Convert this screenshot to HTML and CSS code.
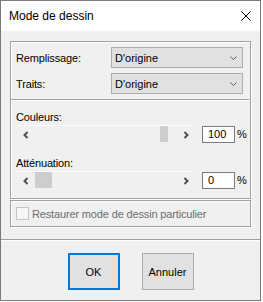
FILE: index.html
```html
<!DOCTYPE html>
<html lang="fr">
<head>
    <meta charset="UTF-8">
    <title>Mode de dessin</title>
    <link rel="stylesheet" href="styles.css">
</head>
<body>
    <div class="window">
        <!-- Title bar -->
        <div class="titlebar">
            <span class="title">Mode de dessin</span>
            <svg class="close" width="10" height="10" viewBox="0 0 10 10">
                <path d="M0.5 0.5 L9.5 9.5 M9.5 0.5 L0.5 9.5" stroke="#000" stroke-width="1" fill="none"/>
            </svg>
        </div>

        <div class="content">
            <div class="frame main-frame">
                <div class="selects">
                    <div class="field-row">
                        <span class="field-label">Remplissage:</span>
                        <div class="select">
                            <span>D'origine</span>
                            <svg class="chevron" width="7" height="4" viewBox="0 0 7 4"><polyline points="0.5,0.5 3.5,3.5 6.5,0.5" stroke="#606060" fill="none"/></svg>
                        </div>
                    </div>
                    <div class="field-row">
                        <span class="field-label">Traits:</span>
                        <div class="select">
                            <span>D'origine</span>
                            <svg class="chevron" width="7" height="4" viewBox="0 0 7 4"><polyline points="0.5,0.5 3.5,3.5 6.5,0.5" stroke="#606060" fill="none"/></svg>
                        </div>
                    </div>
                </div>

                <div class="sliders">
                    <div class="slider-label">Couleurs:</div>
                    <div class="slider-row">
                        <div class="scrollbar">
                            <span class="arrow">
                                <svg width="6" height="8" viewBox="0 0 6 8"><polyline points="4.5,1 1.5,4 4.5,7" stroke="#505050" stroke-width="2" fill="none"/></svg>
                            </span>
                            <div class="track"><div class="thumb" style="margin-left: 126px; width: 8px;"></div></div>
                            <span class="arrow">
                                <svg width="6" height="8" viewBox="0 0 6 8"><polyline points="1.5,1 4.5,4 1.5,7" stroke="#505050" stroke-width="2" fill="none"/></svg>
                            </span>
                        </div>
                        <div class="num-input">100</div>
                        <span class="unit">%</span>
                    </div>

                    <div class="slider-label second">Atténuation:</div>
                    <div class="slider-row">
                        <div class="scrollbar">
                            <span class="arrow">
                                <svg width="6" height="8" viewBox="0 0 6 8"><polyline points="4.5,1 1.5,4 4.5,7" stroke="#505050" stroke-width="2" fill="none"/></svg>
                            </span>
                            <div class="track"><div class="thumb" style="margin-left: 1px; width: 17px;"></div></div>
                            <span class="arrow">
                                <svg width="6" height="8" viewBox="0 0 6 8"><polyline points="1.5,1 4.5,4 1.5,7" stroke="#505050" stroke-width="2" fill="none"/></svg>
                            </span>
                        </div>
                        <div class="num-input">0</div>
                        <span class="unit">%</span>
                    </div>
                </div>
            </div>

            <div class="frame check-frame">
                <span class="checkbox"></span>
                <span class="check-label">Restaurer mode de dessin particulier</span>
            </div>
        </div>

        <!-- Buttons -->
        <div class="footer">
            <button class="btn default">OK</button>
            <button class="btn">Annuler</button>
        </div>
    </div>
</body>
</html>
```

FILE: styles.css
```css
:root {
    --face: #f0f0f0;
    --etch: #a0a0a0;
    --control: #e1e1e1;
    --control-border: #adadad;
    --accent: #0078d7;
}

body {
    margin: 0;
    background: #ffffff;
    font-family: 'Liberation Sans', Arial, sans-serif;
    font-size: 11px;
    color: #000;
}

.window {
    width: 261px;
    height: 301px;
    box-sizing: border-box;
    border: 1px solid #7a7a7a;
    background: var(--face);
    display: flex;
    flex-direction: column;
}

/* Title bar */
.titlebar {
    height: 30px;
    flex-shrink: 0;
    background: #ffffff;
    display: flex;
    align-items: center;
    justify-content: space-between;
    padding: 0 9px 0 8px;
}

.title {
    font-size: 12px;
}

.close {
    display: block;
}

/* Main area */
.content {
    flex: 1;
    padding: 10px 9px 0 9px;
}

.frame {
    border: 1px solid var(--etch);
    box-shadow: inset 1px 1px 0 #fff, 1px 1px 0 #fff;
}

.selects {
    padding: 5px 7px 5px 5px;
    display: flex;
    flex-direction: column;
    gap: 5px;
}

.field-row {
    display: flex;
    align-items: center;
}

.field-label {
    width: 95px;
    letter-spacing: -0.15px;
}

.select {
    flex: 1;
    height: 21px;
    box-sizing: border-box;
    border: 1px solid var(--control-border);
    background: var(--control);
    display: flex;
    align-items: center;
    justify-content: space-between;
    padding: 0 5px 0 3px;
}

.chevron {
    display: block;
}

/* Sliders */
.sliders {
    border-top: 1px solid var(--etch);
    box-shadow: inset 0 1px 0 #fff;
    margin-right: 1px;
    padding: 10px 0 9px 5px;
}

.slider-label {
    line-height: 15px;
    height: 15px;
    letter-spacing: -0.15px;
}

.slider-label.second {
    margin-top: 13px;
}

.slider-row {
    display: flex;
    align-items: flex-end;
    height: 18px;
}

.scrollbar {
    width: 177px;
    height: 17px;
    margin-left: 1px;
    border-top: 1px solid #fff;
    display: flex;
}

.arrow {
    width: 17px;
    display: flex;
    align-items: center;
    justify-content: center;
}

.arrow svg {
    display: block;
}

.track {
    flex: 1;
    display: flex;
}

.thumb {
    height: 16px;
    background: #cdcdcd;
}

.num-input {
    width: 33px;
    height: 17px;
    box-sizing: border-box;
    margin-left: 8px;
    border: 1px solid #7a7a7a;
    background: #fff;
    padding-left: 5px;
    line-height: 15px;
}

.unit {
    margin-left: 2px;
    line-height: 17px;
}

/* Checkbox */
.check-frame {
    margin-top: 1px;
    height: 27px;
    box-sizing: border-box;
    display: flex;
    align-items: center;
    padding-left: 5px;
    gap: 3px;
}

.checkbox {
    width: 13px;
    height: 13px;
    box-sizing: border-box;
    border: 1px solid #c4c4c4;
    background: #f7f7f7;
}

.check-label {
    color: #6d6d6d;
    letter-spacing: -0.15px;
}

/* Buttons */
.footer {
    height: 61px;
    box-sizing: border-box;
    border-top: 1px solid var(--etch);
    box-shadow: inset 0 1px 0 #fff;
    display: flex;
    justify-content: center;
    gap: 22px;
    padding-top: 13px;
}

.btn {
    width: 52px;
    height: 37px;
    box-sizing: border-box;
    margin: 0;
    padding: 0;
    border: 1px solid var(--control-border);
    background: var(--control);
    font-family: inherit;
    font-size: 11px;
    color: #000;
}

.btn.default {
    border: 2px solid var(--accent);
}
```
